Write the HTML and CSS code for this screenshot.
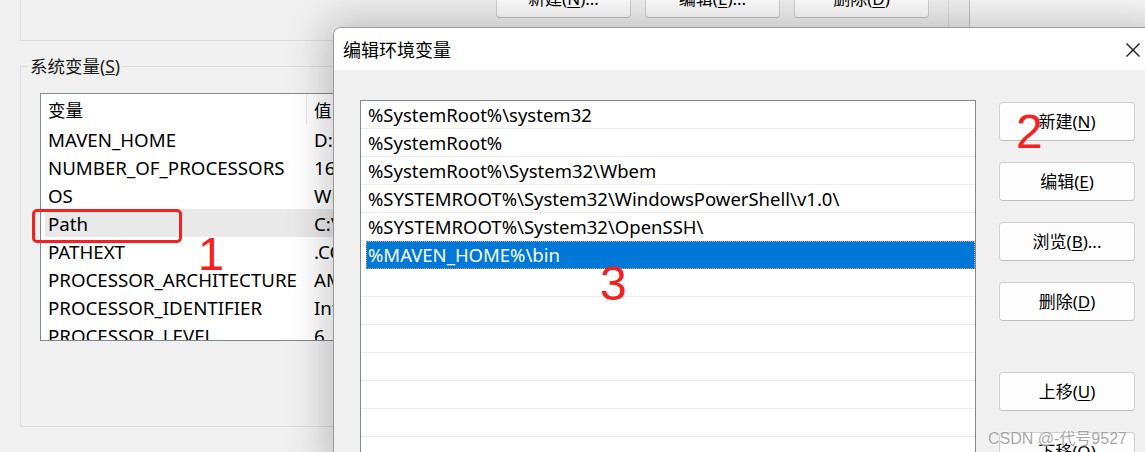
FILE: index.html
```html
<!DOCTYPE html>
<html lang="zh-CN">
<head>
<meta charset="utf-8">
<title>编辑环境变量</title>
<link rel="stylesheet" href="styles.css">
</head>
<body>
<div class="screen">
  <div class="bgwin">
    <div class="group user-group">
      <div class="btn-row">
        <button class="btn">新建(<u>N</u>)...</button>
        <button class="btn">编辑(<u>E</u>)...</button>
        <button class="btn">删除(<u>D</u>)</button>
      </div>
    </div>
    <fieldset class="group sys-group">
      <legend>系统变量(<u>S</u>)</legend>
      <div class="varlist">
        <div class="vrow head"><span class="c1">变量</span><span class="c2">值</span></div>
        <div class="vrow"><span class="c1">MAVEN_HOME</span><span class="c2">D:\maven</span></div>
        <div class="vrow"><span class="c1">NUMBER_OF_PROCESSORS</span><span class="c2">16</span></div>
        <div class="vrow"><span class="c1">OS</span><span class="c2">Windows_NT</span></div>
        <div class="vrow hover"><span class="c1">Path</span><span class="c2">C:\Windows\system32</span></div>
        <div class="vrow"><span class="c1">PATHEXT</span><span class="c2">.COM;.EXE;.BAT</span></div>
        <div class="vrow"><span class="c1">PROCESSOR_ARCHITECTURE</span><span class="c2">AMD64</span></div>
        <div class="vrow"><span class="c1">PROCESSOR_IDENTIFIER</span><span class="c2">Intel64 Family 6</span></div>
        <div class="vrow"><span class="c1">PROCESSOR_LEVEL</span><span class="c2">6</span></div>
      </div>
    </fieldset>
  </div>

  <div class="dialog">
    <div class="titlebar">
      <span class="title">编辑环境变量</span>
      <svg class="close" width="16" height="16" viewBox="0 0 16 16"><path d="M1.5 1.5 L14.5 14.5 M14.5 1.5 L1.5 14.5" stroke="#1a1a1a" stroke-width="1.4" fill="none"/></svg>
    </div>
    <div class="dbody">
      <div class="pathlist">
        <div class="prow">%SystemRoot%\system32</div>
        <div class="prow">%SystemRoot%</div>
        <div class="prow">%SystemRoot%\System32\Wbem</div>
        <div class="prow">%SYSTEMROOT%\System32\WindowsPowerShell\v1.0\</div>
        <div class="prow">%SYSTEMROOT%\System32\OpenSSH\</div>
        <div class="prow selected">%MAVEN_HOME%\bin</div>
        <div class="prow"></div>
        <div class="prow"></div>
        <div class="prow"></div>
        <div class="prow"></div>
        <div class="prow"></div>
        <div class="prow"></div>
        <div class="prow"></div>
      </div>
      <div class="side">
        <button class="btn">新建(<u>N</u>)</button>
        <button class="btn">编辑(<u>E</u>)</button>
        <button class="btn">浏览(<u>B</u>)...</button>
        <button class="btn">删除(<u>D</u>)</button>
        <button class="btn gap">上移(<u>U</u>)</button>
        <button class="btn">下移(<u>O</u>)</button>
      </div>
    </div>
  </div>

  <div class="mark-box"></div>
  <div class="mark n1">1</div>
  <div class="mark n2">2</div>
  <div class="mark n3">3</div>
  <div class="watermark">CSDN @-代号9527</div>
</div>
</body>
</html>
```

FILE: styles.css
```css
* { box-sizing: border-box; }
html, body { margin: 0; padding: 0; }
body {
  width: 1145px;
  height: 452px;
  overflow: hidden;
  background: #f8f8f8;
  font-family: "Noto Sans", "Noto Sans CJK SC", sans-serif;
  font-size: 17px;
  color: #000;
}
.screen {
  position: relative;
  width: 1145px;
  height: 452px;
  overflow: hidden;
}
.bgwin {
  display: flow-root;
  width: 970px;
  height: 452px;
  background: #f0f0f0;
  border-right: 1px solid #c4c4c4;
  padding: 0 20px;
}
.group {
  border: 1px solid #dcdcdc;
}
.user-group {
  margin-top: -22px;
  padding: 0 19px 22px 0;
}
.btn-row {
  display: flex;
  justify-content: flex-end;
  gap: 14px;
}
.btn {
  font: inherit;
  color: #000;
  background: #fdfdfd;
  border: 1px solid #d0d0d0;
  border-bottom-color: #c0c0c0;
  border-radius: 4px;
  height: 39px;
  width: 136px;
  padding: 0;
  display: flex;
  align-items: center;
  justify-content: center;
  line-height: 1;
}
.btn-row .btn { width: 135px; }
.btn u { text-underline-offset: 2px; }

.sys-group {
  margin: 13px 0 0 0;
  padding: 0 0 85px 19px;
  min-width: 0;
}
.sys-group legend {
  margin-left: -12px;
  padding: 0 2px;
  line-height: 24px;
  font-size: 17.5px;
  color: #1a1a1a;
}
.varlist {
  margin-top: 15px;
  width: 889px;
  height: 248px;
  overflow: hidden;
  background: #fff;
  border: 1px solid #828790;
  font-size: 18.7px;
}
.vrow {
  display: flex;
  height: 28px;
  align-items: center;
  white-space: nowrap;
  padding-top: 1px;
}
.vrow.head { height: 31px; font-size: 17.5px; padding-top: 0; }
.vrow .c1 {
  width: 266px;
  padding-left: 7px;
  flex: none;
}
.vrow .c2 { padding-left: 7px; }
.vrow.head .c1 {
  border-right: 1px solid #e5e5e5;
  height: 29px;
  display: flex;
  align-items: center;
}
.vrow.hover {
  background: #e9e9e9;
  margin-left: 4px;
}
.vrow.hover .c1 { width: 262px; padding-left: 3px; }

.dialog {
  position: absolute;
  left: 333px;
  top: 27px;
  width: 830px;
  height: 440px;
  background: #f0f0f0;
  border: 1px solid #9a9a9a;
  border-radius: 8px 0 0 0;
  box-shadow: 0 0 40px 6px rgba(0, 0, 0, 0.22);
  overflow: hidden;
}
.titlebar {
  height: 42px;
  background: #fff;
  display: flex;
  align-items: center;
  justify-content: space-between;
  padding: 0 21px 0 9px;
}
.title {
  font-size: 18px;
  color: #000;
}
.close { flex: none; margin-top: 2px; }
.dbody {
  display: flex;
  align-items: flex-start;
  padding: 30px 0 0 26px;
  gap: 23px;
}
.pathlist {
  width: 616px;
  height: 420px;
  background: #fff;
  border: 1px solid #828790;
  flex: none;
}
.prow {
  height: 28px;
  border-bottom: 1px solid #ececec;
  padding-left: 7px;
  font-size: 18.5px;
  line-height: 27px;
  white-space: nowrap;
}
.prow.selected {
  background: #0078d7;
  color: #fff;
  margin-left: 5px;
  padding-left: 2px;
  outline: 1px dotted #e0a060;
  outline-offset: -1px;
  border-bottom-color: #0078d7;
}
.side {
  display: flex;
  flex-direction: column;
  gap: 21px;
  margin-top: 2px;
}
.side .btn { font-size: 17px; }
.side .gap { margin-top: 30px; }

.mark-box {
  position: absolute;
  left: 32px;
  top: 209px;
  width: 150px;
  height: 34px;
  border: 3px solid #f52020;
  border-radius: 5px;
}
.mark {
  position: absolute;
  color: #f52020;
  font-family: "Liberation Sans", sans-serif;
  font-size: 48px;
  line-height: 1;
}
.n1 { left: 198px; top: 230px; font-size: 47px; }
.n2 { left: 1016px; top: 108px; }
.n3 { left: 600px; top: 260px; }
.watermark {
  position: absolute;
  left: 988px;
  top: 425px;
  font-family: "Liberation Sans", "Noto Sans CJK SC", sans-serif;
  font-size: 16px;
  color: rgba(150, 150, 150, 0.85);
  text-shadow: 0 0 2px #fff;
  white-space: nowrap;
}
```
